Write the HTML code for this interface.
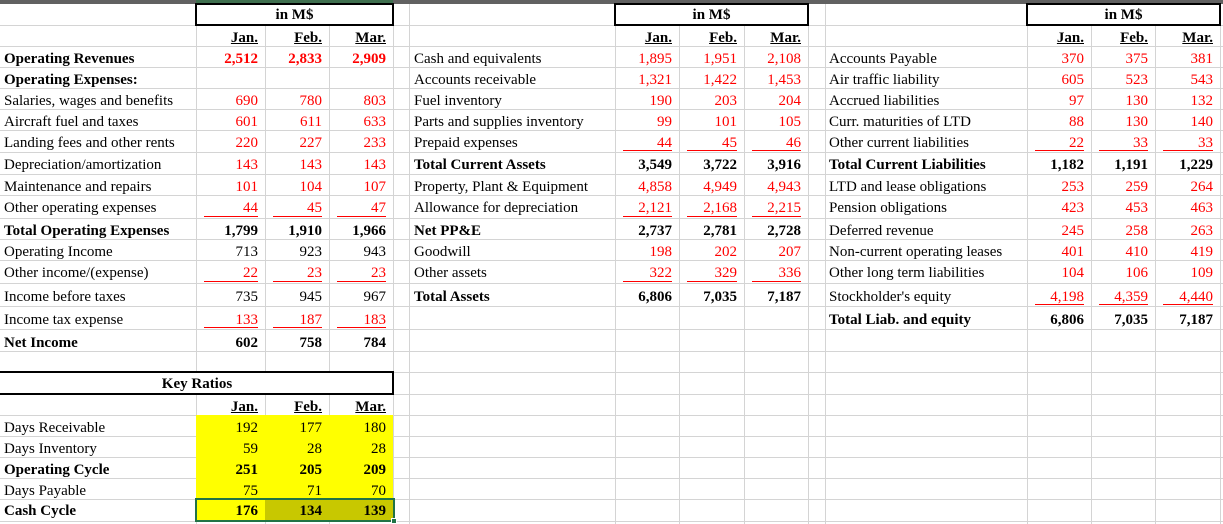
<!DOCTYPE html>
<html><head><meta charset="utf-8"><style>
*{margin:0;padding:0;box-sizing:border-box}
body{width:1223px;height:524px;overflow:hidden;background:#fff;font-family:"Liberation Serif",serif;font-size:15px;color:#000;position:relative}
.r{position:absolute;left:0;width:1223px}
.r>div{position:absolute;top:0;height:100%;white-space:nowrap;padding-top:2px}
.l1{left:0;width:196px;padding-left:4px}
.l2{left:410px;width:205px;padding-left:4px}
.l3{left:825px;width:202px;padding-left:4px}
.a{left:196px;width:69px}.b{left:265px;width:64px}.c{left:329px;width:64px}
.d{left:615px;width:64px}.e{left:679px;width:65px}.f{left:744px;width:64px}
.g{left:1027px;width:64px}.h{left:1091px;width:64px}.i{left:1155px;width:65px}
.a,.b,.c,.d,.e,.f,.g,.h,.i{text-align:right;padding-right:7px}
.red{color:#f00}
.bo{font-weight:bold}
.u{border-bottom:0}
.u::after{content:"";position:absolute;left:8px;right:7px;bottom:1px;height:1px;background:#ff0000}
.hd{font-weight:bold;text-decoration:underline}
.box{position:absolute;border:2px solid #000;background:#fff;text-align:center;font-weight:bold}
</style></head><body>
<svg width="1223" height="524" style="position:absolute;left:0;top:0" shape-rendering="crispEdges">
<g stroke="#d4d4d4" stroke-width="1">
<line x1="196.5" y1="0" x2="196.5" y2="524"/><line x1="265.5" y1="0" x2="265.5" y2="524"/><line x1="329.5" y1="0" x2="329.5" y2="524"/><line x1="393.5" y1="0" x2="393.5" y2="524"/><line x1="409.5" y1="0" x2="409.5" y2="524"/>
<line x1="615.5" y1="0" x2="615.5" y2="524"/><line x1="679.5" y1="0" x2="679.5" y2="524"/><line x1="744.5" y1="0" x2="744.5" y2="524"/><line x1="808.5" y1="0" x2="808.5" y2="524"/><line x1="825.5" y1="0" x2="825.5" y2="524"/>
<line x1="1027.5" y1="0" x2="1027.5" y2="524"/><line x1="1091.5" y1="0" x2="1091.5" y2="524"/><line x1="1155.5" y1="0" x2="1155.5" y2="524"/><line x1="1220.5" y1="0" x2="1220.5" y2="524"/>
<line x1="0" y1="25.5" x2="1223" y2="25.5"/><line x1="0" y1="46.5" x2="1223" y2="46.5"/><line x1="0" y1="67.5" x2="1223" y2="67.5"/><line x1="0" y1="88.5" x2="1223" y2="88.5"/><line x1="0" y1="109.5" x2="1223" y2="109.5"/><line x1="0" y1="130.5" x2="1223" y2="130.5"/><line x1="0" y1="152.5" x2="1223" y2="152.5"/><line x1="0" y1="174.5" x2="1223" y2="174.5"/><line x1="0" y1="195.5" x2="1223" y2="195.5"/><line x1="0" y1="218.5" x2="1223" y2="218.5"/><line x1="0" y1="239.5" x2="1223" y2="239.5"/><line x1="0" y1="260.5" x2="1223" y2="260.5"/><line x1="0" y1="283.5" x2="1223" y2="283.5"/><line x1="0" y1="306.5" x2="1223" y2="306.5"/><line x1="0" y1="329.5" x2="1223" y2="329.5"/><line x1="0" y1="351.5" x2="1223" y2="351.5"/><line x1="0" y1="372.5" x2="1223" y2="372.5"/><line x1="0" y1="394.5" x2="1223" y2="394.5"/><line x1="0" y1="415.5" x2="1223" y2="415.5"/><line x1="0" y1="436.5" x2="1223" y2="436.5"/><line x1="0" y1="457.5" x2="1223" y2="457.5"/><line x1="0" y1="478.5" x2="1223" y2="478.5"/><line x1="0" y1="499.5" x2="1223" y2="499.5"/><line x1="0" y1="521.5" x2="1223" y2="521.5"/>
</g>
<rect x="0" y="0" width="1223" height="4" fill="#616161"/>
<rect x="196" y="0" width="197" height="3" fill="#3f6f4f"/>
<rect x="196" y="415" width="197" height="106" fill="#ffff00"/>
<rect x="265" y="500" width="128" height="20" fill="#c8c800"/>
</svg>

<div class="box" style="left:195px;top:3px;width:199px;height:23px;line-height:21px">in M$</div>
<div class="box" style="left:614px;top:3px;width:195px;height:23px;line-height:21px">in M$</div>
<div class="box" style="left:1026px;top:3px;width:195px;height:23px;line-height:21px">in M$</div>
<div class="box" style="left:-2px;top:371px;width:396px;height:24px;line-height:22px;padding-left:2px">Key Ratios</div>

<div class="r" style="top:25px;height:21px;line-height:22px"><div class="a hd">Jan.</div><div class="b hd">Feb.</div><div class="c hd">Mar.</div><div class="d hd">Jan.</div><div class="e hd">Feb.</div><div class="f hd">Mar.</div><div class="g hd">Jan.</div><div class="h hd">Feb.</div><div class="i hd">Mar.</div></div>

<div class="r" style="top:46px;height:21px;line-height:22px"><div class="l1 bo">Operating Revenues</div><div class="a bo red">2,512</div><div class="b bo red">2,833</div><div class="c bo red">2,909</div><div class="l2">Cash and equivalents</div><div class="d red">1,895</div><div class="e red">1,951</div><div class="f red">2,108</div><div class="l3">Accounts Payable</div><div class="g red">370</div><div class="h red">375</div><div class="i red">381</div></div>

<div class="r" style="top:67px;height:21px;line-height:22px"><div class="l1 bo">Operating Expenses:</div><div class="l2">Accounts receivable</div><div class="d red">1,321</div><div class="e red">1,422</div><div class="f red">1,453</div><div class="l3">Air traffic liability</div><div class="g red">605</div><div class="h red">523</div><div class="i red">543</div></div>

<div class="r" style="top:88px;height:21px;line-height:22px"><div class="l1">Salaries, wages and benefits</div><div class="a red">690</div><div class="b red">780</div><div class="c red">803</div><div class="l2">Fuel inventory</div><div class="d red">190</div><div class="e red">203</div><div class="f red">204</div><div class="l3">Accrued liabilities</div><div class="g red">97</div><div class="h red">130</div><div class="i red">132</div></div>

<div class="r" style="top:109px;height:21px;line-height:22px"><div class="l1">Aircraft fuel and taxes</div><div class="a red">601</div><div class="b red">611</div><div class="c red">633</div><div class="l2">Parts and supplies inventory</div><div class="d red">99</div><div class="e red">101</div><div class="f red">105</div><div class="l3">Curr. maturities of LTD</div><div class="g red">88</div><div class="h red">130</div><div class="i red">140</div></div>

<div class="r" style="top:130px;height:22px;line-height:22px"><div class="l1">Landing fees and other rents</div><div class="a red">220</div><div class="b red">227</div><div class="c red">233</div><div class="l2">Prepaid expenses</div><div class="d red u">44</div><div class="e red u">45</div><div class="f red u">46</div><div class="l3">Other current liabilities</div><div class="g red u">22</div><div class="h red u">33</div><div class="i red u">33</div></div>

<div class="r" style="top:152px;height:22px;line-height:23px"><div class="l1">Depreciation/amortization</div><div class="a red">143</div><div class="b red">143</div><div class="c red">143</div><div class="l2 bo">Total Current Assets</div><div class="d bo">3,549</div><div class="e bo">3,722</div><div class="f bo">3,916</div><div class="l3 bo">Total Current Liabilities</div><div class="g bo">1,182</div><div class="h bo">1,191</div><div class="i bo">1,229</div></div>

<div class="r" style="top:174px;height:21px;line-height:22px"><div class="l1">Maintenance and repairs</div><div class="a red">101</div><div class="b red">104</div><div class="c red">107</div><div class="l2">Property, Plant &amp; Equipment</div><div class="d red">4,858</div><div class="e red">4,949</div><div class="f red">4,943</div><div class="l3">LTD and lease obligations</div><div class="g red">253</div><div class="h red">259</div><div class="i red">264</div></div>

<div class="r" style="top:195px;height:23px;line-height:22px"><div class="l1">Other operating expenses</div><div class="a red u">44</div><div class="b red u">45</div><div class="c red u">47</div><div class="l2">Allowance for depreciation</div><div class="d red u">2,121</div><div class="e red u">2,168</div><div class="f red u">2,215</div><div class="l3">Pension obligations</div><div class="g red">423</div><div class="h red">453</div><div class="i red">463</div></div>

<div class="r" style="top:218px;height:21px;line-height:22px"><div class="l1 bo">Total Operating Expenses</div><div class="a bo">1,799</div><div class="b bo">1,910</div><div class="c bo">1,966</div><div class="l2 bo">Net PP&amp;E</div><div class="d bo">2,737</div><div class="e bo">2,781</div><div class="f bo">2,728</div><div class="l3">Deferred revenue</div><div class="g red">245</div><div class="h red">258</div><div class="i red">263</div></div>

<div class="r" style="top:239px;height:21px;line-height:22px"><div class="l1">Operating Income</div><div class="a">713</div><div class="b">923</div><div class="c">943</div><div class="l2">Goodwill</div><div class="d red">198</div><div class="e red">202</div><div class="f red">207</div><div class="l3">Non-current operating leases</div><div class="g red">401</div><div class="h red">410</div><div class="i red">419</div></div>

<div class="r" style="top:260px;height:23px;line-height:22px"><div class="l1">Other income/(expense)</div><div class="a red u">22</div><div class="b red u">23</div><div class="c red u">23</div><div class="l2">Other assets</div><div class="d red u">322</div><div class="e red u">329</div><div class="f red u">336</div><div class="l3">Other long term liabilities</div><div class="g red">104</div><div class="h red">106</div><div class="i red">109</div></div>

<div class="r" style="top:283px;height:23px;line-height:24px"><div class="l1">Income before taxes</div><div class="a">735</div><div class="b">945</div><div class="c">967</div><div class="l2 bo">Total Assets</div><div class="d bo">6,806</div><div class="e bo">7,035</div><div class="f bo">7,187</div><div class="l3">Stockholder's equity</div><div class="g red u">4,198</div><div class="h red u">4,359</div><div class="i red u">4,440</div></div>

<div class="r" style="top:306px;height:23px;line-height:24px"><div class="l1">Income tax expense</div><div class="a red u">133</div><div class="b red u">187</div><div class="c red u">183</div><div class="l3 bo">Total Liab. and equity</div><div class="g bo">6,806</div><div class="h bo">7,035</div><div class="i bo">7,187</div></div>

<div class="r" style="top:329px;height:22px;line-height:24px"><div class="l1 bo">Net Income</div><div class="a bo">602</div><div class="b bo">758</div><div class="c bo">784</div></div>

<div class="r" style="top:394px;height:21px;line-height:22px"><div class="a hd">Jan.</div><div class="b hd">Feb.</div><div class="c hd">Mar.</div></div>
<div class="r" style="top:415px;height:21px;line-height:22px"><div class="l1">Days Receivable</div><div class="a">192</div><div class="b">177</div><div class="c">180</div></div>
<div class="r" style="top:436px;height:21px;line-height:22px"><div class="l1">Days Inventory</div><div class="a">59</div><div class="b">28</div><div class="c">28</div></div>
<div class="r" style="top:457px;height:21px;line-height:22px"><div class="l1 bo">Operating Cycle</div><div class="a bo">251</div><div class="b bo">205</div><div class="c bo">209</div></div>
<div class="r" style="top:478px;height:21px;line-height:22px"><div class="l1">Days Payable</div><div class="a">75</div><div class="b">71</div><div class="c">70</div></div>
<div class="r" style="top:499px;height:22px;line-height:21px"><div class="l1 bo">Cash Cycle</div><div class="a bo">176</div><div class="b bo">134</div><div class="c bo">139</div></div>

<div style="position:absolute;left:195px;top:498px;width:200px;height:24px;border:2px solid #217346"></div>
<div style="position:absolute;left:391px;top:518px;width:6px;height:6px;background:#217346;border:1px solid #fff"></div>
</body></html>
